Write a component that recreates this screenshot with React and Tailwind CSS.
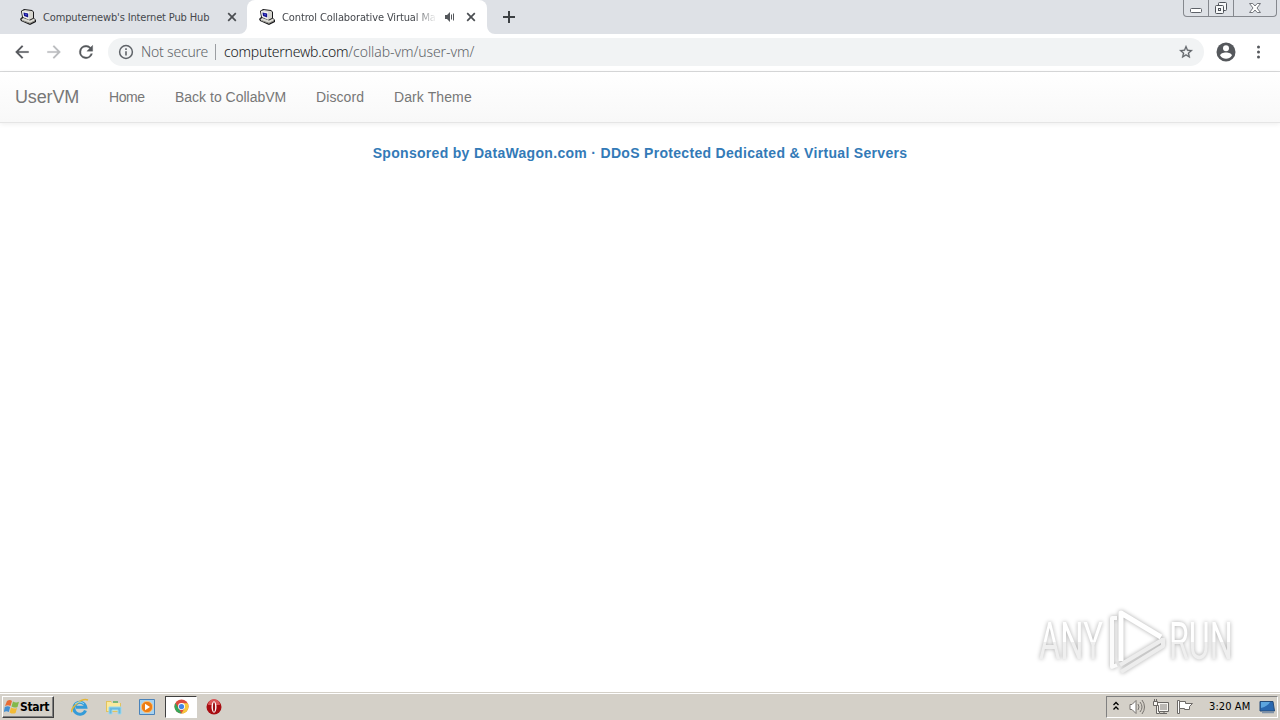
const tahoma = "font-['DejaVu_Sans_Condensed','DejaVu_Sans',sans-serif] [font-stretch:condensed]";

const navLinks = [
    { label: 'Home', className: 'w-[66px] tracking-[-0.4px]' },
    { label: 'Back to CollabVM', className: 'w-[141px]' },
    { label: 'Discord', className: 'w-[78px] tracking-[0.1px]' },
    { label: 'Dark Theme', className: 'w-[108px] tracking-[0.1px]' },
];

function ComputerIcon() {
    return (
        <svg className="h-4 w-4 shrink-0" viewBox="0 0 16 16">
            <path d="m1 2 3-2 8 1 2 2v6l2 2v2l-6 3-9-4-1-2 2-2z" fill="#18181b" />
            <path d="m2 2 3-1 7 1 1 1v6l-4 2-6-3z" fill="#d6d5cf" />
            <path d="m2 2 7 1v7L3 8z" fill="#f4f4ef" />
            <path d="m3.5 3.5 4.7 1v4L4 7z" fill="#14148c" />
            <path d="m5 4.5 2 .5v1.5L5 6z" fill="#4444d0" />
            <path d="m1.5 10 2-1 6.5 2.5 4-2 1.2 1.7L10 14.5l-8-3z" fill="#dddcd6" />
            <path d="m3 11.7 7 2.5 5-2.4" fill="none" stroke="#8b8a83" />
        </svg>
    );
}

function CloseIcon() {
    return (
        <svg className="h-2.5 w-2.5 shrink-0" viewBox="0 0 10 10">
            <path d="m1.2 1.2 7.6 7.6m0-7.6L1.2 8.8" stroke="#4a4d51" strokeWidth="1.7" />
        </svg>
    );
}

function TabStrip() {
    return (
        <div className="flex h-[34px] bg-[#dee1e6]">
            <div className={`flex h-[34px] w-[247px] items-center rounded-br-lg pl-5 text-[11px] text-[#45484d] ${tahoma}`}>
                <ComputerIcon />
                <span className="ml-[7px] w-[184px] pt-0.5 whitespace-nowrap tracking-[-0.14px]">Computernewb's Internet Pub Hub</span>
                <CloseIcon />
            </div>
            <div className={`relative flex h-[34px] w-60 items-center rounded-t-lg bg-white pl-3 text-[11px] text-[#45484d] ${tahoma}`}>
                <svg className="absolute bottom-0 -left-2 h-2 w-2" viewBox="0 0 8 8"><path d="M8 0v8H0a8 8 0 0 0 8-8" fill="#fff" /></svg>
                <svg className="absolute -right-2 bottom-0 h-2 w-2" viewBox="0 0 8 8"><path d="M0 0v8h8a8 8 0 0 1-8-8" fill="#fff" /></svg>
                <ComputerIcon />
                <span className="ml-[7px] w-[153px] pt-0.5 whitespace-nowrap tracking-[-0.12px] [mask-image:linear-gradient(to_right,#000_132px,transparent_155px)]">Control Collaborative Virtual Ma</span>
                <svg className="ml-[9px] h-3 w-3" viewBox="0 0 12 12">
                    <path d="M1 4h2l3-3v10L3 8H1z" fill="#55585c" />
                    <path d="M7.5 3.5v5M9.5 2.5v7" stroke="#55585c" />
                </svg>
                <div className="ml-2.5"><CloseIcon /></div>
            </div>
            <svg className="mt-[11px] ml-4 h-3 w-3" viewBox="0 0 12 12"><path d="M6 0v12M0 6h12" stroke="#3c4043" strokeWidth="2" /></svg>
            <div className="mr-[3px] ml-auto flex h-[17px] w-[94px] rounded-b-[4px] border border-t-0 border-[#85888e]">
                <div className="flex w-[25px] justify-center border-r border-[#85888e]">
                    <svg className="h-4 w-4" viewBox="0 0 16 16"><rect x="2.5" y="8.5" width="11" height="4" rx="1" fill="#fff" stroke="#5e6269" /></svg>
                </div>
                <div className="flex w-[25px] justify-center border-r border-[#85888e]">
                    <svg className="h-4 w-4" viewBox="0 0 16 16" fill="#f7f8f9" stroke="#4f535a">
                        <rect x="5.5" y="2.5" width="8" height="8" rx="1" />
                        <rect x="2.5" y="5.5" width="8" height="8" rx="1" />
                        <rect x="5.5" y="8.5" width="2" height="2" />
                    </svg>
                </div>
                <div className="flex grow justify-center">
                    <svg className="h-4 w-4" viewBox="0 0 16 16"><path d="M2.5 3.5h3.3L8 6l2.2-2.5h3.3L10 8l3.5 4.5h-3.3L8 10l-2.2 2.5H2.5L6 8z" fill="#fff" stroke="#74777d" /></svg>
                </div>
            </div>
        </div>
    );
}

function Toolbar() {
    return (
        <div className="flex h-[38px] items-center border-b border-[#d9dadb] bg-white pb-px pl-3 text-[#5f6368]">
            <svg className="h-5 w-5" viewBox="0 0 24 24" fill="#55585c" stroke="#55585c" strokeWidth=".2"><path d="M20 11H7.83l5.59-5.59L12 4l-8 8 8 8 1.41-1.41L7.83 13H20z" /></svg>
            <svg className="ml-3 h-5 w-5" viewBox="0 0 24 24" fill="#babcbe" stroke="#babcbe" strokeWidth=".2"><path d="m12 4-1.41 1.41L16.17 11H4v2h12.17l-5.58 5.59L12 20l8-8z" /></svg>
            <svg className="ml-3 h-5 w-5" viewBox="0 0 24 24" fill="#55585c" stroke="#55585c" strokeWidth=".4"><path d="M17.65 6.35A7.96 7.96 0 0 0 12 4a8 8 0 1 0 7.73 10h-2.08A6 6 0 1 1 12 6c1.66 0 3.14.69 4.22 1.78L13 11h7V4z" /></svg>
            <div className="ml-3 flex h-7 w-[1096px] items-center rounded-full bg-[#f1f3f4] pl-2.5 font-['Noto_Sans',sans-serif] text-[14px] font-light">
                <svg className="h-4 w-4" viewBox="0 0 16 16" fill="none" stroke="#5f6368">
                    <circle cx="8" cy="8" r="6.4" strokeWidth="1.5" />
                    <path d="M8 7.2v4.3M8 4.3v1.6" strokeWidth="1.6" />
                </svg>
                <span className="ml-[7px] w-[74px] pb-px whitespace-nowrap tracking-[-0.2px]">Not secure</span>
                <span className="h-4 w-px bg-[#9b9ea2]" />
                <span className="ml-2 pb-px whitespace-nowrap tracking-[-0.07px]"><span className="tracking-[-0.2px] text-[#17181a]">computernewb.com</span>/collab-vm/user-vm/</span>
                <svg className="mr-2.5 ml-auto h-4 w-4" viewBox="0 0 24 24" fill="#5f6368" stroke="#5f6368" strokeWidth=".4"><path d="m22 9.24-7.19-.62L12 2 9.19 8.63 2 9.24l5.46 4.73L5.82 21 12 17.27 18.18 21l-1.63-7.03zM12 15.4l-3.76 2.27 1-4.28-3.32-2.88 4.38-.38L12 6.1l1.71 4.04 4.38.38-3.32 2.88 1 4.28z" /></svg>
            </div>
            <svg className="ml-3 h-5 w-5" viewBox="0 0 20 20">
                <circle cx="10" cy="10" r="9.5" fill="#55585c" />
                <circle cx="10" cy="6.3" r="3" fill="#fff" />
                <path d="M4.2 13.5c0-4 11.6-4 11.6 0-2.6 4.3-9 4.3-11.6 0" fill="#fff" />
            </svg>
            <svg className="ml-3.5 h-5 w-5" viewBox="0 0 20 20" fill="#55585c"><circle cx="8.5" cy="5" r="1.5" /><circle cx="8.5" cy="10" r="1.5" /><circle cx="8.5" cy="15" r="1.5" /></svg>
        </div>
    );
}

const watermarkText = "block w-max origin-left bg-linear-to-b from-white from-50% to-[#efefef] to-50% bg-clip-text font-[Roboto,sans-serif] text-[52px] leading-[60px] text-transparent";

function Watermark() {
    return (
        <div className="absolute right-10 bottom-[15px] flex h-[72px] w-[201px] items-center drop-shadow-[0_0_2px_#aaa]">
            <div className="w-[68px] pt-0.5"><span className={`scale-x-[0.63] ${watermarkText}`}>ANY</span></div>
            <svg className="h-[70px] w-[62px] shrink-0" viewBox="0 0 62 70" fill="none" strokeLinejoin="round">
                <path d="M10 12H5v49l5-2" stroke="#fbfbfb" strokeWidth="4" />
                <path d="M14 55V7l40 24" stroke="#fff" strokeWidth="5" />
                <path d="m13 59 42-25M14 66l42-26v-8" stroke="#ededed" strokeWidth="4" />
            </svg>
            <div className="w-[66px] pt-0.5"><span className={`scale-x-[0.62] ${watermarkText}`}>RUN</span></div>
        </div>
    );
}

function Taskbar() {
    return (
        <div className={`flex h-7 items-center border-t border-[#d4d0c8] bg-[#d4d0c8] text-[11px] text-black shadow-[inset_0_1px_#fff] ${tahoma}`}>
            <div className="ml-0.5 flex h-[22px] w-[52px] items-center border border-t-white border-r-[#404040] border-b-[#404040] border-l-white pl-px font-bold shadow-[inset_-1px_-1px_#808080]">
                <svg className="h-4 w-4 shrink-0" viewBox="0 0 16 16">
                    <path d="M3 2q3-2 5 0L6.5 7Q4 5.5 1 7z" fill="#e86c35" />
                    <path d="M9 2.5q3 1.8 6 .2L13.5 8q-3 1.4-6-.5z" fill="#83b84b" />
                    <path d="M.8 8q3-1.5 5.4 0L4.8 13q-2.5-1.5-5 0z" fill="#438fd2" />
                    <path d="M7 8.5q3 1.8 6 .4L11.6 14q-3 1.4-6-.6z" fill="#f3bb35" />
                </svg>
                <span className="text-[12px] tracking-[-0.35px]">Start</span>
            </div>
            <svg className="ml-[17px] h-[18px] w-[18px]" viewBox="0 0 18 18" fill="none">
                <path d="M14.5 12.5a6 6 0 1 1 .3-3.3H5" stroke="#349bd8" strokeWidth="3" />
                <path d="M1 14C-1 11 10-1 17 2" stroke="#e3b638" strokeWidth="1.5" />
                <path d="M4 6q5-4 9 0" stroke="#94dcf7" />
            </svg>
            <svg className="ml-4 h-[18px] w-[18px]" viewBox="0 0 18 18">
                <path d="M1 3h5l1 2h9v9H1z" fill="#e3c35d" />
                <path d="M2 4h4l1 1h8v8H2z" fill="#fae99d" />
                <path d="M8 4h5" stroke="#5bae61" strokeWidth="1.5" />
                <path d="M4 16V9h12v7h-3v-4H7v4z" fill="#69b9de" stroke="#9bd8ef" />
            </svg>
            <svg className="ml-[15px] h-[18px] w-[18px]" viewBox="0 0 18 18">
                <path d="M1.5 1.5h15v15h-15z" fill="#a7d2ef" stroke="#4a83ba" />
                <circle cx="9" cy="9" r="5.7" fill="#ed7e14" stroke="#fac27c" />
                <path d="m7 5.8 5 3.2-5 3.2z" fill="#fff" />
            </svg>
            <div className="ml-[9px] flex h-[22px] w-8 items-center justify-center border border-t-[#404040] border-r-white border-b-white border-l-[#404040] bg-white">
                <svg className="h-[15px] w-[15px]" viewBox="0 0 16 16">
                    <circle cx="8" cy="8" r="7.5" fill="#dc4c3d" />
                    <path d="M1.5 4.3 5 10l3 5.5A7.5 7.5 0 0 1 1.5 4.3" fill="#34a85a" />
                    <path d="M8 4.6h6.7A7.5 7.5 0 0 1 8 15.5l3-5.5z" fill="#f6c83b" />
                    <circle cx="8" cy="8" r="3.7" fill="#fff" />
                    <circle cx="8" cy="8" r="2.8" fill="#4385e5" />
                </svg>
            </div>
            <svg className="ml-[9px] h-4 w-4" viewBox="0 0 16 16">
                <circle cx="8" cy="8" r="7.5" fill="#a80d12" />
                <path d="M2 6a6 6 0 0 1 12 0" fill="#db5657" />
                <ellipse cx="8" cy="8" rx="2.5" ry="5.7" fill="#fff" />
                <ellipse cx="8" cy="8" rx="1.1" ry="4.7" fill="#9e1115" />
            </svg>
            <div className="mr-0.5 ml-auto flex h-[22px] w-[172px] items-center border border-t-[#808080] border-r-white border-b-white border-l-[#808080] pl-1.5">
                <svg className="mb-0.5 h-2.5 w-1.5" viewBox="0 0 6 10" fill="none" stroke="#000" strokeWidth="1.3"><path d="m.5 4 2.5-2.5L5.5 4M.5 8.5 3 6l2.5 2.5" /></svg>
                <svg className="ml-2.5 h-4 w-4" viewBox="0 0 16 16" fill="#fff" stroke="#77736f">
                    <path d="M1 5.5h2l4-4v13l-4-4H1z" />
                    <path d="M9 5q2 3 0 6M11 3q4 5 0 10M13 1q5 7 0 14" fill="none" />
                </svg>
                <svg className="ml-2 h-4 w-4" viewBox="0 0 16 16" fill="#f7f5f1" stroke="#696663">
                    <path d="M4.5 3.5h11v9h-11zM7 14.5h7m-3-2v2" />
                    <path d="M7 5h7v6H7z" fill="#bbb8b4" stroke="none" />
                    <path d="M.5 2.5h4v4h-1v8h3v-2h-1v-6h-5zM1.5 0v2m2-2v2" />
                </svg>
                <svg className="ml-2 h-4 w-4" viewBox="0 0 16 16" fill="#fff" stroke="#6c6966">
                    <path d="M.5 1.5v13h2v-13z" />
                    <path d="M2.5 2.5h6v2h7l-3 3v3h-5v-1h-5z" />
                </svg>
                <span className="ml-4 w-[50px] pt-0.5 whitespace-nowrap tracking-[0.1px]">3:20 AM</span>
                <svg className="h-4 w-4" viewBox="0 0 16 16">
                    <path d="M1 2.5h13l1.5 9.5H1z" fill="#2968b0" stroke="#254b78" />
                    <path d="M2 3h9Q9 7 2 9z" fill="#5ca5df" />
                    <path d="M3 13.5h12" stroke="#7f92a8" strokeWidth="1.5" />
                </svg>
            </div>
        </div>
    );
}

export default function App() {
    return (
        <div className="flex h-screen flex-col overflow-hidden bg-white">
            <TabStrip />
            <Toolbar />
            <main className="relative grow font-['Liberation_Sans',sans-serif]">
                <nav className="flex h-[51px] items-center border-b border-[#e5e5e5] bg-linear-to-b from-white to-[#f8f8f8] pl-[15px] text-[14px] text-[#777] shadow-[0_1px_5px_rgba(0,0,0,0.075)]">
                    <span className="w-[94px] text-[18px] tracking-[-0.15px]">UserVM</span>
                    {navLinks.map((link) => (
                        <a key={link.label} href="#" className={`whitespace-nowrap ${link.className}`}>{link.label}</a>
                    ))}
                </nav>
                <p className="mt-5 text-center text-[14px] leading-5 font-bold tracking-[0.31px] text-[#337ab7]">
                    <a href="#">Sponsored by DataWagon.com · DDoS Protected Dedicated &amp; Virtual Servers</a>
                </p>
                <Watermark />
            </main>
            <Taskbar />
        </div>
    );
}
